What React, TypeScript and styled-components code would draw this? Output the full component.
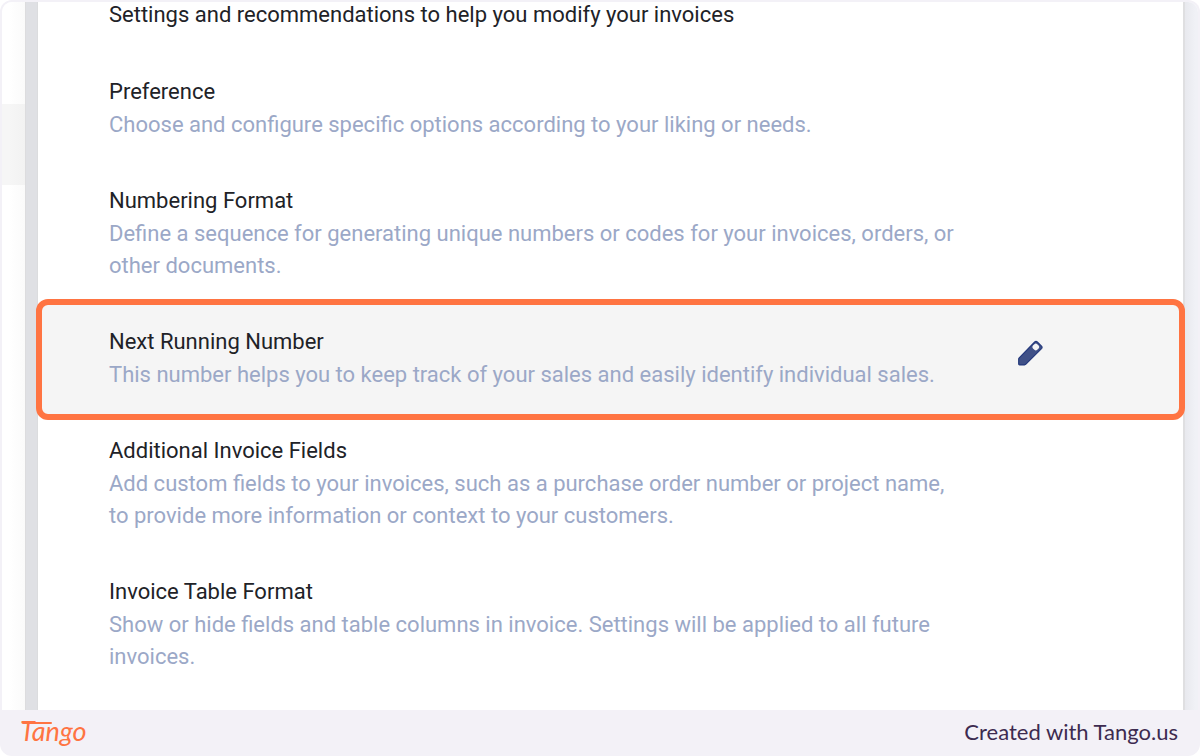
import React from "react";
import styled, { createGlobalStyle } from "styled-components";

const GlobalStyle = createGlobalStyle`
  *, *::before, *::after { box-sizing: border-box; }
  body { margin: 0; background: #ffffff; }
`;

const Frame = styled.div`
  display: flex;
  flex-direction: column;
  min-height: 100vh;
  border-radius: 12px;
  overflow: hidden;
  background: #f3f1f7;
  font-family: Roboto, "Liberation Sans", sans-serif;
`;

const Screen = styled.div`
  display: flex;
  flex: 1;
  margin: 2px 2px 0;
  border-radius: 10px 10px 0 0;
  overflow: hidden;
  background: #ffffff;
`;

const Sidebar = styled.nav`
  flex: 0 0 23px;
  padding-top: 102px;
  background: linear-gradient(to right, #ffffff 30%, #fafafa);
`;

const SidebarItem = styled.div`
  height: 81px;
  background: linear-gradient(to right, #f6f6f6 30%, #f2f2f2);
`;

const Gutter = styled.div`
  flex: 0 0 13px;
  background: #dfe0e4;
  border-left: 1px solid #dcdcde;
  border-right: 1px solid #dbdcde;
`;

const Edge = styled.div`
  flex: 0 0 15px;
  border-left: 2px solid #dfdfe1;
  background: linear-gradient(to right, #e8e9ee, #f0f1f6 80%);
`;

const Panel = styled.main`
  flex: 1;
  min-width: 0;
`;

const Intro = styled.p`
  margin: 0;
  padding: 0 140px 27px 71px;
  font-size: 22px;
  line-height: 26px;
  color: #212227;
`;

const Row = styled.section<{ $active?: boolean }>`
  position: relative;
  display: grid;
  grid-template-columns: 1fr 26px;
  column-gap: 60px;
  padding: 21px 140px 23px 71px;
  background: ${(p) => (p.$active ? "#f5f5f5" : "transparent")};
`;

const Title = styled.h2`
  margin: 0;
  font-size: 22px;
  font-weight: 400;
  line-height: 32px;
  color: #212227;
`;

const Description = styled.p`
  margin: 1px 0 0;
  font-size: 22px;
  line-height: 32px;
  color: #9ba8c7;
`;

const Highlight = styled.div`
  position: absolute;
  inset: -6px -2px;
  border: 6px solid #ff7442;
  border-radius: 12px;
  pointer-events: none;
  z-index: 1;
`;

const EditButton = styled.button`
  align-self: start;
  display: block;
  width: 26px;
  height: 26px;
  margin: 14px 0 0;
  padding: 0;
  border: 0;
  background: none;
  cursor: pointer;

  svg { display: block; }
`;

const Footer = styled.footer`
  display: flex;
  align-items: center;
  justify-content: space-between;
  height: 46px;
  padding: 0 22px 2px 20px;
  font-family: Lato, "Open Sans", sans-serif;
`;

const Brand = styled.a`
  position: relative;
  padding-bottom: 2px;
  color: #ff7442;
  font-size: 27px;
  font-style: italic;
  line-height: 32px;
  text-decoration: none;

  &::after {
    content: "";
    position: absolute;
    top: 7px;
    left: 2px;
    width: 30px;
    height: 2px;
    border-radius: 1px;
    background: #ff7442;
  }
`;

const Credit = styled.span`
  font-size: 22px;
  line-height: 32px;
  color: #3d2b50;
`;

type Setting = { title: string; text: string; active?: boolean };

const settings: Setting[] = [
  {
    title: "Preference",
    text: "Choose and configure specific options according to your liking or needs.",
  },
  {
    title: "Numbering Format",
    text: "Define a sequence for generating unique numbers or codes for your invoices, orders, or other documents.",
  },
  {
    title: "Next Running Number",
    text: "This number helps you to keep track of your sales and easily identify individual sales.",
    active: true,
  },
  {
    title: "Additional Invoice Fields",
    text: "Add custom fields to your invoices, such as a purchase order number or project name, to provide more information or context to your customers.",
  },
  {
    title: "Invoice Table Format",
    text: "Show or hide fields and table columns in invoice. Settings will be applied to all future invoices.",
  },
];

function PencilIcon() {
  return (
    <svg width="26" height="26" viewBox="0 0 26 26" aria-hidden="true">
      <path
        d="M2.200 17.800 17.700 2Q19 .8 20.300 2L24.500 6.200Q25.600 7.400 24.500 8.600L8.900 24.200Q8.300 24.800 7.500 24.900H2.500Q1.700 24.900 1.700 24.100V19Q1.700 18.300 2.200 17.800Z"
        fill="#3f5087"
        stroke="#24397c"
        strokeWidth="1.200"
      />
      <rect x="15.800" y="4" width="6" height="6" rx="2" transform="rotate(45 18.800 7)" fill="#f5f5f5" />
    </svg>
  );
}

export default function App() {
  return (
    <>
      <GlobalStyle />
      <Frame>
        <Screen>
          <Sidebar aria-label="Sections">
            <SidebarItem />
          </Sidebar>
          <Gutter />
          <Panel>
            <Intro>Settings and recommendations to help you modify your invoices</Intro>
            {settings.map((s) => (
              <Row key={s.title} $active={s.active}>
                <div>
                  <Title>{s.title}</Title>
                  <Description>{s.text}</Description>
                </div>
                {s.active && (
                  <EditButton type="button" aria-label={`Edit ${s.title}`}>
                    <PencilIcon />
                  </EditButton>
                )}
                {s.active && <Highlight />}
              </Row>
            ))}
          </Panel>
          <Edge />
        </Screen>
        <Footer>
          <Brand href="#tango">Tango</Brand>
          <Credit>Created with Tango.us</Credit>
        </Footer>
      </Frame>
    </>
  );
}
